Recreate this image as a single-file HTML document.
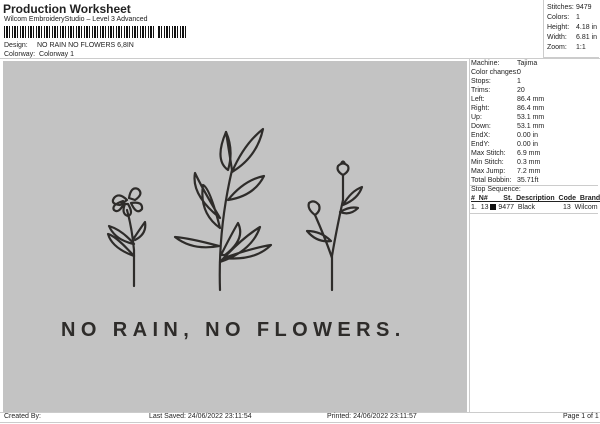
<!DOCTYPE html>
<html><head><style>
*{margin:0;padding:0;box-sizing:border-box}
body{width:600px;height:424px;background:#fff;font-family:"Liberation Sans",sans-serif;color:#222;position:relative;overflow:hidden;font-size:7px}
.a{position:absolute;white-space:nowrap}
</style></head><body>
<div class="a" style="left:3px;top:2px;font-size:12px;font-weight:bold">Production Worksheet</div>
<div class="a" style="left:4px;top:16px;font-size:7px">Wilcom EmbroideryStudio – Level 3 Advanced</div>
<div class="a" style="left:4px;top:26px;width:182px;height:12px;background:repeating-linear-gradient(90deg,#111 0 1px,#fff 1px 2px,#111 2px 4px,#fff 4px 5px,#111 5px 6px,#fff 6px 8px)"></div>
<div class="a" style="left:154px;top:26px;width:4px;height:12px;background:#fff"></div>
<div class="a" style="left:4px;top:42px">Design:</div>
<div class="a" style="left:37px;top:42px">NO RAIN NO FLOWERS 6,8IN</div>
<div class="a" style="left:4px;top:51px">Colorway:&nbsp; Colorway 1</div>
<div class="a" style="left:543px;top:0;width:56px;height:58px;border-left:1px solid #ccc;border-bottom:1px solid #ccc"></div>
<div class="a" style="left:547px;top:3px;line-height:10px">Stitches:<br>Colors:<br>Height:<br>Width:<br>Zoom:</div>
<div class="a" style="left:576px;top:3px;line-height:10px">9479<br>1<br>4.18 in<br>6.81 in<br>1:1</div>
<div class="a" style="left:0;top:58px;width:600px;border-top:1px solid #ccc"></div>
<div class="a" style="left:3px;top:61px;width:464px;height:351px;background:#c3c3c3"></div>
<div class="a" style="left:469px;top:58px;width:1px;height:354px;background:#ccc"></div>
<div class="a" style="left:471px;top:59px;line-height:9px">Machine:<br>Color changes:<br>Stops:<br>Trims:<br>Left:<br>Right:<br>Up:<br>Down:<br>EndX:<br>EndY:<br>Max Stitch:<br>Min Stitch:<br>Max Jump:<br>Total Bobbin:</div>
<div class="a" style="left:517px;top:59px;line-height:9px">Tajima<br>0<br>1<br>20<br>86.4 mm<br>86.4 mm<br>53.1 mm<br>53.1 mm<br>0.00 in<br>0.00 in<br>6.9 mm<br>0.3 mm<br>7.2 mm<br>35.71ft</div>
<div class="a" style="left:470px;top:185px;width:128px;border-top:1px solid #ccc"></div>
<div class="a" style="left:471px;top:186px">Stop Sequence:</div>
<div class="a" style="left:471px;top:195px;font-weight:bold;text-decoration:underline">#&nbsp; N#&nbsp;&nbsp;&nbsp;&nbsp;&nbsp;&nbsp;&nbsp; St.&nbsp; Description&nbsp; Code&nbsp; Brand</div>
<div class="a" style="left:471px;top:204px">1.&nbsp; 13 <span style="display:inline-block;width:6px;height:6px;background:#111;vertical-align:-1px"></span> 9477&nbsp; Black</div>
<div class="a" style="left:563px;top:204px">13&nbsp; Wilcom</div>
<div class="a" style="left:470px;top:213px;width:128px;border-top:1px solid #ccc"></div>
<div class="a" style="left:0;top:412px;width:600px;height:11px;border-top:1px solid #ccc;border-bottom:1px solid #ccc"></div>
<div class="a" style="left:4px;top:413px">Created By:</div>
<div class="a" style="left:149px;top:413px">Last Saved: 24/06/2022 23:11:54</div>
<div class="a" style="left:327px;top:413px">Printed: 24/06/2022 23:11:57</div>
<div class="a" style="left:563px;top:413px">Page 1 of 1</div>
<svg class="a" style="left:0;top:0" width="600" height="424" fill="none" stroke="#2e2c2a" stroke-width="2.2" stroke-linecap="round" stroke-linejoin="round">
<path d="M134 286 L134 250 Q132 228 127 210"/>
<path d="M127 200 q-8 -8 -13 -2 q-4 6 6 7 z M129 198 q2 -12 9 -9 q6 5 -3 11 z M131 203 q12 -2 11 6 q-5 6 -10 -4 z M125 204 q-4 10 3 12 q6 -2 0 -12 z M123 201 q-12 4 -9 9 q5 4 10 -7 z"/>
<path d="M134 256 q-18 -20 -26 -22 q4 14 26 22 M134 244 q-12 -14 -25 -18 q6 14 25 18 M134 238 q8 -12 11 -16 q2 12 -10 18"/>
<path d="M220 290 Q218 230 232 170 L226 132"/>
<path d="M226 132 q-12 28 2 38 q6 -20 -2 -38 z M232 172 q12 -28 31 -43 q-6 28 -31 43 z M228 200 q16 -20 36 -24 q-10 20 -36 24 z M220 218 q-18 -30 -25 -45 q-4 22 25 45 z M220 228 q-10 -40 -17 -43 q-4 28 17 43 z M219 246 q-30 -8 -44 -9 q18 14 44 9 z M220 262 q22 -24 40 -35 q-8 24 -40 35 z M224 258 q28 -10 47 -13 q-16 16 -47 13 z M221 255 q10 -20 17 -32 q8 16 -13 32 z"/>
<path d="M332 290 L332 256 Q336 232 343 200 L343 175 M332 258 Q326 240 315 215"/>
<path d="M343 175 q-7 -4 -5 -9 q5 -5 10 0 q2 5 -5 9 z M341 164 q2 -5 4 0 M315 215 q-8 -6 -6 -12 q5 -4 10 2 q2 6 -4 10 z M343 205 q8 -14 19 -18 q-4 12 -19 18 z M340 212 q10 -6 18 -4 q-8 8 -18 4 z M331 241 q-10 -10 -24 -10 q10 12 24 10 z"/>
</svg>
<div class="a" style="left:61px;top:319px;font-size:20px;letter-spacing:5.4px;color:#2e2c2a;font-weight:bold">NO RAIN, NO FLOWERS.</div>
</body></html>
